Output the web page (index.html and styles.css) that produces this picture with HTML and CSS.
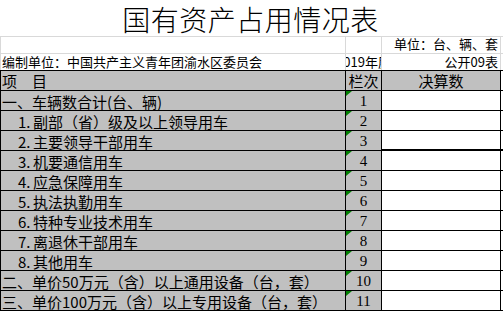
FILE: index.html
```html
<!DOCTYPE html>
<html lang="zh-CN">
<head>
<meta charset="utf-8">
<title>国有资产占用情况表</title>
<link rel="stylesheet" href="styles.css">
</head>
<body>
<div class="sheet">
  <div class="title">国有资产占用情况表</div>

  <div class="row meta meta-1">
    <div class="c c1"></div>
    <div class="c c2"></div>
    <div class="c c3 right">单位：台、辆、套</div>
  </div>
  <div class="row meta meta-2">
    <div class="c c1">编制单位：中国共产主义青年团渝水区委员会</div>
    <div class="c c2 clip"><span>2019年度</span></div>
    <div class="c c3 right">公开09表</div>
  </div>

  <div class="row head">
    <div class="c c1"><span>项</span><span class="gap">目</span></div>
    <div class="c c2 center">栏次</div>
    <div class="c c3 center">决算数</div>
  </div>

  <div class="row data">
    <div class="c c1">一、车辆数合计(台、辆)</div>
    <div class="c c2 no"><i class="flag"></i>1</div>
    <div class="c c3"></div>
  </div>
  <div class="row data">
    <div class="c c1 indent"><span class="n">1.</span>副部（省）级及以上领导用车</div>
    <div class="c c2 no"><i class="flag"></i>2</div>
    <div class="c c3"></div>
  </div>
  <div class="row data thick">
    <div class="c c1 indent"><span class="n">2.</span>主要领导干部用车</div>
    <div class="c c2 no"><i class="flag"></i>3</div>
    <div class="c c3"></div>
  </div>
  <div class="row data">
    <div class="c c1 indent"><span class="n">3.</span>机要通信用车</div>
    <div class="c c2 no"><i class="flag"></i>4</div>
    <div class="c c3"></div>
  </div>
  <div class="row data">
    <div class="c c1 indent"><span class="n">4.</span>应急保障用车</div>
    <div class="c c2 no"><i class="flag"></i>5</div>
    <div class="c c3"></div>
  </div>
  <div class="row data">
    <div class="c c1 indent"><span class="n">5.</span>执法执勤用车</div>
    <div class="c c2 no"><i class="flag"></i>6</div>
    <div class="c c3"></div>
  </div>
  <div class="row data">
    <div class="c c1 indent"><span class="n">6.</span>特种专业技术用车</div>
    <div class="c c2 no"><i class="flag"></i>7</div>
    <div class="c c3"></div>
  </div>
  <div class="row data">
    <div class="c c1 indent"><span class="n">7.</span>离退休干部用车</div>
    <div class="c c2 no"><i class="flag"></i>8</div>
    <div class="c c3"></div>
  </div>
  <div class="row data">
    <div class="c c1 indent"><span class="n">8.</span>其他用车</div>
    <div class="c c2 no"><i class="flag"></i>9</div>
    <div class="c c3"></div>
  </div>
  <div class="row data">
    <div class="c c1">二、单价50万元（含）以上通用设备（台，套）</div>
    <div class="c c2 no"><i class="flag"></i>10</div>
    <div class="c c3"></div>
  </div>
  <div class="row data">
    <div class="c c1">三、单价100万元（含）以上专用设备（台，套）</div>
    <div class="c c2 no"><i class="flag"></i>11</div>
    <div class="c c3"></div>
  </div>
</div>
</body>
</html>
```

FILE: styles.css
```css
html, body {
  margin: 0;
  padding: 0;
  background: #ffffff;
}

body {
  font-family: "Noto Sans CJK SC", "Noto Sans", sans-serif;
  color: #000000;
}

.sheet {
  width: 503px;
}

.title {
  box-sizing: border-box;
  height: 37px;
  width: 503px;
  border-bottom: 1px solid #d9d9d9;
  font-size: 28px;
  font-weight: 300;
  letter-spacing: 0.5px;
  padding-top: 4px;
  line-height: 30px;
  text-align: center;
  padding-right: 2px;
  white-space: nowrap;
}

.row {
  display: grid;
  grid-template-columns: 346px 36px 119px;
  box-sizing: border-box;
}

.c {
  box-sizing: border-box;
  white-space: nowrap;
}

.right {
  text-align: right;
  padding-right: 2px;
}

.center {
  text-align: center;
}

/* meta rows (light grid lines) */
.meta {
  font-size: 13px;
}

.meta .c {
  border-right: 1px solid #d9d9d9;
}

.meta .c1 {
  border-left: 1px solid #d9d9d9;
  padding-left: 1px;
}

.meta-1 {
  height: 17px;
  border-bottom: 1px solid #d9d9d9;
  line-height: 13px;
}

.meta-2 {
  height: 17px;
  border-bottom: 1px solid #000000;
  line-height: 16px;
}

.clip {
  display: flex;
  justify-content: center;
  overflow: hidden;
}

.clip span {
  flex: none;
}

/* header and data rows */
.head,
.data {
  height: 20px;
  border-bottom: 1px solid #000000;
  font-size: 15px;
  line-height: 17px;
}

.head .c,
.data .c {
  border-right: 1px solid #000000;
  padding-top: 2px;
}

.head .c1,
.data .c1 {
  border-left: 1px solid #000000;
  padding-left: 1px;
}

.head .c1,
.head .c2,
.head .c3,
.data .c1,
.data .c2 {
  background: #c0c0c0;
}

.head .c {
  padding-top: 1px;
}

.gap {
  margin-left: 15px;
}

.data.thick {
  border-bottom-width: 2px;
}

.indent {
  padding-left: 17px !important;
}

.n {
  display: inline-block;
  width: 15px;
}

.no {
  position: relative;
  text-align: center;
  font-family: "Liberation Serif", serif;
}

.flag {
  position: absolute;
  top: 0;
  left: 0;
  width: 0;
  height: 0;
  border-top: 5px solid #008000;
  border-right: 6px solid transparent;
}
```
